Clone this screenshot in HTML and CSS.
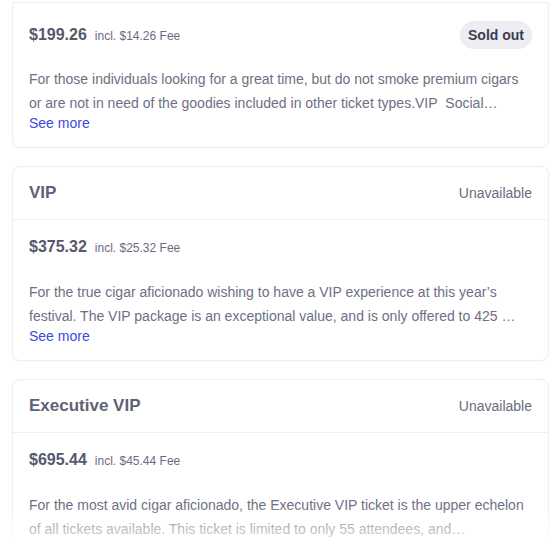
FILE: index.html
```html
<!DOCTYPE html>
<html>
<head>
<meta charset="utf-8">
<link rel="stylesheet" href="styles.css">
</head>
<body>
<div class="list">
  <section class="card card--cut">
    <div class="card-body">
      <div class="price-row">
        <div class="price"><span class="amount">$199.26</span><span class="fee">incl. $14.26 Fee</span></div>
        <span class="badge">Sold out</span>
      </div>
      <p class="desc">For those individuals looking for a great time, but do not smoke premium cigars or are not in need of the goodies included in other ticket types.VIP&nbsp; Social…</p>
      <a class="more" href="#">See more</a>
    </div>
  </section>

  <section class="card">
    <header class="card-head">
      <h2 class="title">VIP</h2>
      <span class="status">Unavailable</span>
    </header>
    <div class="card-body">
      <div class="price-row">
        <div class="price"><span class="amount">$375.32</span><span class="fee">incl. $25.32 Fee</span></div>
      </div>
      <p class="desc">For the true cigar aficionado wishing to have a VIP experience at this year’s festival. The VIP package is an exceptional value, and is only offered to 425&nbsp;…</p>
      <a class="more" href="#">See more</a>
    </div>
  </section>

  <section class="card">
    <header class="card-head">
      <h2 class="title">Executive VIP</h2>
      <span class="status">Unavailable</span>
    </header>
    <div class="card-body">
      <div class="price-row">
        <div class="price"><span class="amount">$695.44</span><span class="fee">incl. $45.44 Fee</span></div>
      </div>
      <p class="desc">For the most avid cigar aficionado, the Executive VIP ticket is the upper echelon of all tickets available. This ticket is limited to only 55 attendees, and…</p>
      <a class="more" href="#">See more</a>
    </div>
  </section>
</div>
<div class="fade"></div>
</body>
</html>
```

FILE: styles.css
```css
html, body {
  margin: 0;
  padding: 0;
  background: #ffffff;
  overflow: hidden;
}
body {
  font-family: "Liberation Sans", Arial, sans-serif;
  width: 558px;
  height: 540px;
  position: relative;
}
.list {
  display: flex;
  flex-direction: column;
  gap: 18px;
  padding: 2px 9px 0 12px;
}
.card {
  border: 1px solid #efeff1;
  border-radius: 8px;
  background: #fff;
  box-shadow: 0 1px 2px rgba(0, 0, 0, 0.02);
}
.card--cut {
  border-top-left-radius: 0;
  border-top-right-radius: 0;
}
.card-head {
  display: flex;
  justify-content: space-between;
  align-items: center;
  height: 52px;
  padding: 0 16px;
  border-bottom: 1px solid #efeff1;
}
.title {
  margin: 0;
  font-size: 17px;
  font-weight: 700;
  color: #5f6276;
}
.status {
  font-size: 14px;
  color: #6a6c7e;
}
.card-body {
  padding: 15px 16px 15px;
}
.price-row {
  display: flex;
  justify-content: space-between;
  align-items: center;
  min-height: 24px;
  margin-bottom: 21px;
}
.card--cut .price-row {
  margin-top: 3px;
  min-height: 28px;
  margin-bottom: 18px;
}
.price {
  display: flex;
  align-items: baseline;
  gap: 8px;
}
.amount {
  font-size: 16px;
  font-weight: 700;
  color: #56596b;
}
.fee {
  font-size: 12px;
  color: #6a6c7e;
}
.badge {
  display: inline-flex;
  align-items: center;
  height: 28px;
  padding: 0 8px;
  border-radius: 14px;
  background: #ededf2;
  color: #3b3d51;
  font-size: 14px;
  font-weight: 700;
}
.desc {
  margin: 0;
  font-size: 14px;
  line-height: 24px;
  color: #6d7083;
  display: -webkit-box;
  -webkit-box-orient: vertical;
  -webkit-line-clamp: 2;
  overflow: hidden;
}
.more {
  display: block;
  margin-top: -1px;
  font-size: 14px;
  line-height: 18px;
  color: #3a49e2;
  text-decoration: none;
}
.fade {
  position: absolute;
  left: 0;
  right: 0;
  bottom: 0;
  height: 34px;
  background: linear-gradient(to bottom, rgba(255,255,255,0) 0%, rgba(255,255,255,0.55) 70%, rgba(255,255,255,0.7) 100%);
  pointer-events: none;
}
```
